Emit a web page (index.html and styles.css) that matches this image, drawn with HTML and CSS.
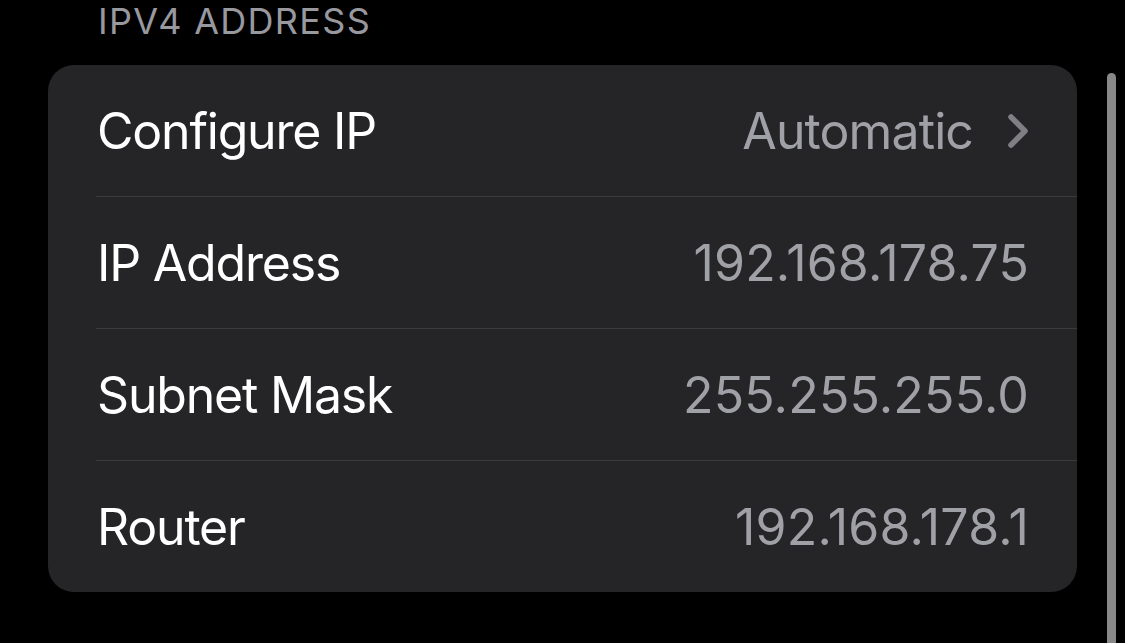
FILE: index.html
```
<!DOCTYPE html>
<html>
<head>
	<title>IPv4 Address</title>
	<meta charset="UTF-8">
	<link rel="stylesheet" href="styles.css">
</head>
<body>

    <div class="section">
        <h2 class="section-title">IPV4 ADDRESS</h2>

        <div class="card">
            <div class="row">
                <span class="label">Configure IP</span>
                <span class="value">
                    Automatic
                    <svg class="chevron" width="22" height="36" viewBox="0 0 22 36">
                        <path d="M4 4 L18 18 L4 32" fill="none" stroke="#7f7f84" stroke-width="5.5" stroke-linecap="round" stroke-linejoin="round"/>
                    </svg>
                </span>
            </div>
            <div class="row">
                <span class="label">IP Address</span>
                <span class="value num">192.168.178.75</span>
            </div>
            <div class="row">
                <span class="label">Subnet Mask</span>
                <span class="value num">255.255.255.0</span>
            </div>
            <div class="row">
                <span class="label">Router</span>
                <span class="value num">192.168.178.1</span>
            </div>
        </div>
    </div>

    <div class="scrollbar"></div>

</body>
</html>
```

FILE: styles.css
```
* {
    font-family: Inter, "Noto Sans", sans-serif;
    box-sizing: border-box;
}
body {
    margin: 0;
    background-color: #000;
    height: 643px;
    overflow: hidden;
}
.section {
    padding: 0 0 0 48px;
}
.section-title {
    margin: 0;
    padding: 1px 0 0 50px;
    height: 65px;
    font-size: 36px;
    font-weight: 400;
    letter-spacing: 1.3px;
    line-height: 40px;
    color: #98989f;
}
.card {
    width: 1029px;
    background-color: #252527;
    border-radius: 26px;
    padding-left: 48px;
}
.row {
    display: flex;
    justify-content: space-between;
    align-items: center;
    height: 132px;
    padding-right: 48px;
    border-bottom: 1px solid #3b3b3e;
}
.row:last-child {
    border-bottom: none;
    height: 131px;
}
.label {
    padding-left: 1px;
    font-size: 50px;
    letter-spacing: -1.2px;
    color: #ffffff;
}
.value {
    display: flex;
    align-items: center;
    gap: 34px;
    font-size: 50px;
    letter-spacing: -0.9px;
    color: #a0a0a7;
}
.num {
    letter-spacing: 0.2px;
}
.chevron {
    display: block;
}
.scrollbar {
    position: absolute;
    left: 1107px;
    top: 73px;
    width: 9px;
    height: 600px;
    border-radius: 5px;
    background-color: #888888;
}
```
